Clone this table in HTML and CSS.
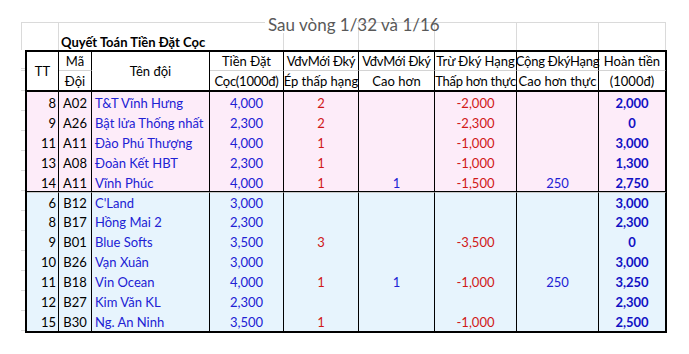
FILE: index.html
```
<!DOCTYPE html>
<html lang="vi">
<head>
<meta charset="utf-8">
<title>Quyết Toán Tiền Đặt Cọc</title>
<link rel="stylesheet" href="styles.css">
</head>
<body>
<div class="sheet">
  <div class="title"><span class="title-mask"></span><span class="title-text">Sau vòng 1/32 và 1/16</span></div>
  <div class="caption-row">
    <div></div>
    <div class="caption-cell"><span class="caption">Quyết Toán Tiền Đặt Cọc</span></div>
    <div></div><div></div><div></div><div></div><div></div>
  </div>
  <div class="body-row">
    <div class="gutter"></div>
    <div class="table">
      <div class="cols thead">
        <div class="span">TT</div>
        <div class="h1">Mã</div>
        <div class="span">Tên đội</div>
        <div class="h1">Tiền Đặt</div>
        <div class="h1 tight">VđvMới Đký</div>
        <div class="h1 tight">VđvMới Đký</div>
        <div class="h1">Trừ Đký Hạng</div>
        <div class="h1 tight">Cộng ĐkýHạng</div>
        <div class="h1">Hoàn tiền</div>
        <div class="h2">Đội</div>
        <div class="h2 tight">Cọc(1000đ)</div>
        <div class="h2">Ép thấp hạng</div>
        <div class="h2">Cao hơn</div>
        <div class="h2 tight">Thấp hơn thực</div>
        <div class="h2">Cao hơn thực</div>
        <div class="h2">(1000đ)</div>
      </div>
      <div class="cols group group-a">
        <div class="n">8</div><div class="code">A02</div><div class="team">T&amp;T Vĩnh Hưng</div><div class="num">4,000</div><div class="red">2</div><div class="num"></div><div class="red">-2,000</div><div class="num"></div><div class="total">2,000</div>
        <div class="n">9</div><div class="code">A26</div><div class="team">Bật lửa Thống nhất</div><div class="num">2,300</div><div class="red">2</div><div class="num"></div><div class="red">-2,300</div><div class="num"></div><div class="total">0</div>
        <div class="n">11</div><div class="code">A11</div><div class="team">Đào Phú Thượng</div><div class="num">4,000</div><div class="red">1</div><div class="num"></div><div class="red">-1,000</div><div class="num"></div><div class="total">3,000</div>
        <div class="n">13</div><div class="code">A08</div><div class="team">Đoàn Kết HBT</div><div class="num">2,300</div><div class="red">1</div><div class="num"></div><div class="red">-1,000</div><div class="num"></div><div class="total">1,300</div>
        <div class="n">14</div><div class="code">A11</div><div class="team">Vĩnh Phúc</div><div class="num">4,000</div><div class="red">1</div><div class="num">1</div><div class="red">-1,500</div><div class="num">250</div><div class="total">2,750</div>
      </div>
      <div class="cols group group-b">
        <div class="n first">6</div><div class="code first">B12</div><div class="team first">C'Land</div><div class="num first">3,000</div><div class="red first"></div><div class="num first"></div><div class="red first"></div><div class="num first"></div><div class="total first">3,000</div>
        <div class="n">8</div><div class="code">B17</div><div class="team">Hồng Mai 2</div><div class="num">2,300</div><div class="red"></div><div class="num"></div><div class="red"></div><div class="num"></div><div class="total">2,300</div>
        <div class="n">9</div><div class="code">B01</div><div class="team">Blue Softs</div><div class="num">3,500</div><div class="red">3</div><div class="num"></div><div class="red">-3,500</div><div class="num"></div><div class="total">0</div>
        <div class="n">10</div><div class="code">B26</div><div class="team">Vạn Xuân</div><div class="num">3,000</div><div class="red"></div><div class="num"></div><div class="red"></div><div class="num"></div><div class="total">3,000</div>
        <div class="n">11</div><div class="code">B18</div><div class="team">Vin Ocean</div><div class="num">4,000</div><div class="red">1</div><div class="num">1</div><div class="red">-1,000</div><div class="num">250</div><div class="total">3,250</div>
        <div class="n">12</div><div class="code">B27</div><div class="team">Kim Văn KL</div><div class="num">2,300</div><div class="red"></div><div class="num"></div><div class="red"></div><div class="num"></div><div class="total">2,300</div>
        <div class="n">15</div><div class="code">B30</div><div class="team">Ng. An Ninh</div><div class="num">3,500</div><div class="red">1</div><div class="num"></div><div class="red">-1,000</div><div class="num"></div><div class="total">2,500</div>
      </div>
    </div>
  </div>
</div>
</body>
</html>
```
FILE: styles.css
```
html, body {
  margin: 0;
  padding: 0;
  background: #ffffff;
}

.sheet {
  position: relative;
  width: 689px;
  height: 354px;
  box-sizing: border-box;
  padding-top: 22px;
  font-family: Lato, "Liberation Sans", sans-serif;
  font-size: 13px;
  color: #000;
}

.title {
  position: absolute;
  left: 265px;
  top: 0;
  width: 180px;
  height: 34px;
  z-index: 2;
}

.title-mask {
  position: absolute;
  left: 0;
  top: 0;
  width: 92px;
  height: 33px;
  background: #ffffff;
}

.title-text {
  position: absolute;
  left: 3px;
  top: 14px;
  font-size: 17px;
  line-height: normal;
  color: #595959;
  white-space: nowrap;
}

.caption-row {
  display: grid;
  grid-template-columns: 37px 225px 75px 76px 82px 82px 68px;
  width: 645px;
  height: 28px;
  margin-left: 21px;
  border-top: 1px solid #dadada;
  box-sizing: border-box;
}

.caption-row > div {
  border-left: 1px solid #dadada;
}

.caption-row > div:last-child {
  border-right: 1px solid #dadada;
}

.caption-row > .caption-cell {
  display: flex;
  align-items: flex-end;
}

.caption {
  padding-left: 2px;
  font-weight: 700;
  line-height: 16px;
  white-space: nowrap;
}

.body-row {
  display: flex;
  margin-left: 21px;
}

.gutter {
  width: 4px;
  height: 282px;
  background: repeating-linear-gradient(to bottom, #dadada 0 1px, transparent 1px 20px);
  background-position: 0 20px;
}

.table {
  width: 642px;
  box-sizing: border-box;
  border: 2px solid #000;
  border-right-width: 1px;
}

.cols {
  display: grid;
  grid-template-columns: 32px 33px 118px 74px 75px 76px 82px 82px 67px;
}

.cols > div {
  box-sizing: border-box;
  border-right: 1px solid #000;
  white-space: nowrap;
  line-height: 20px;
  padding-top: 1px;
}

.thead {
  grid-template-rows: 19px 19px;
}

.thead > div {
  display: flex;
  justify-content: center;
  color: #000;
}

.thead > .tight {
  letter-spacing: -0.25px;
}

.thead > .span {
  grid-row: span 2;
  align-items: center;
  padding-top: 0;
  line-height: 18px;
}

.thead > .h1 {
  line-height: 18px;
  padding-top: 0;
  border-bottom: 1px solid #d4d4d4;
}

.thead > .h2 {
  line-height: 18px;
  padding-top: 1px;
}

.group-a {
  background: #fdecf9;
  border-top: 2px solid #000;
  grid-template-rows: repeat(4, 20px) 19px;
}

.group-b {
  background: #e7f4fd;
  border-top: 1px solid #000;
  grid-template-rows: 19px repeat(6, 20px);
}

.group-b > .first {
  border-top: 1px solid #c9c9c9;
  padding-top: 0;
}

.n {
  text-align: right;
  padding-right: 2px;
  color: #000;
}

.code {
  text-align: center;
  color: #000;
}

.team {
  text-align: left;
  padding-left: 3px;
  color: #2121d4;
}

.num {
  text-align: center;
  color: #2121d4;
}

.red {
  text-align: center;
  color: #d01818;
}

.total {
  text-align: center;
  font-weight: 700;
  color: #1111c4;
}
```
